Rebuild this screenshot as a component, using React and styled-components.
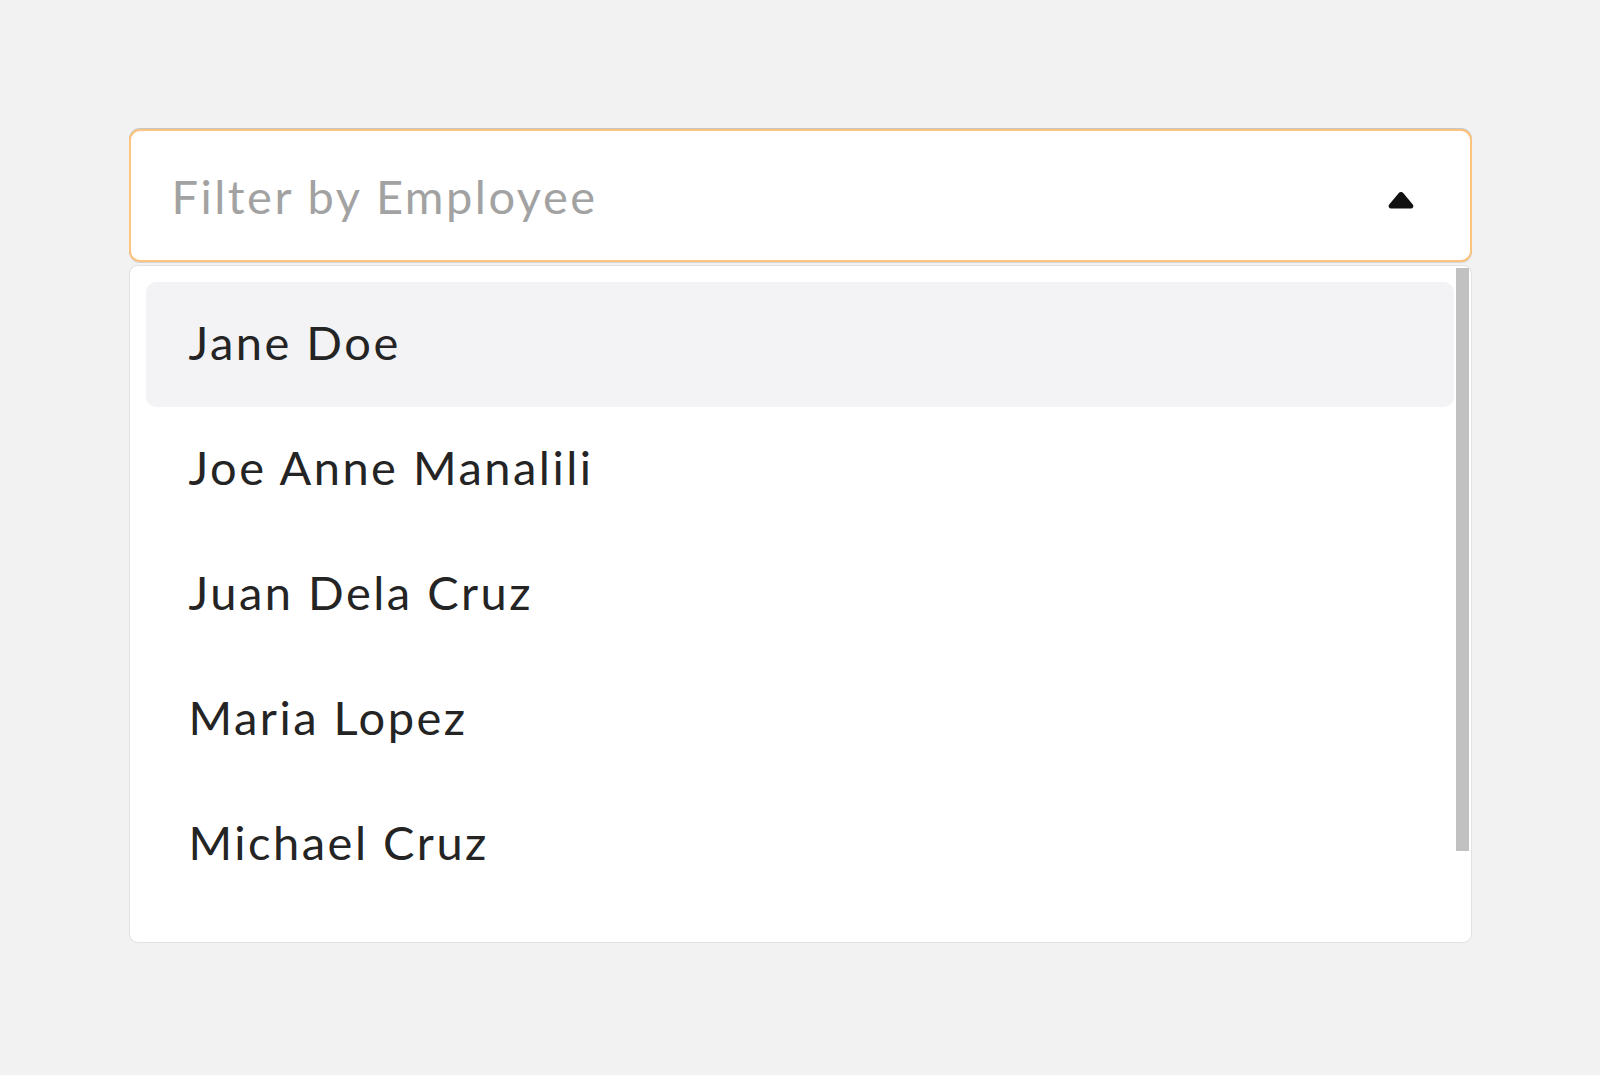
import styled, { createGlobalStyle } from "styled-components";

const GlobalStyle = createGlobalStyle`
    html, body {
        margin: 0;
        padding: 0;
        background: #f2f2f2;
        font-family: "Lato", "Noto Sans", sans-serif;
    }
`;

const Page = styled.div`
    min-height: 1075px;
    padding-top: 129px;
    box-sizing: border-box;
`;

const Select = styled.div`
    width: 1343px;
    margin: 0 auto;
    display: flex;
    flex-direction: column;
    gap: 3px;
`;

const Trigger = styled.button`
    height: 133px;
    display: flex;
    align-items: center;
    justify-content: space-between;
    padding: 0 55px 0 41px;
    background: #fff;
    border: 2px solid #fcc47f;
    border-radius: 11px;
    box-shadow: 0 -1px 0 rgba(0, 0, 0, 0.18), 0 1px 0 rgba(0, 0, 0, 0.12);
    font-family: inherit;
    cursor: pointer;

    svg {
        margin-top: 9px;
    }
`;

const Placeholder = styled.span`
    font-size: 47px;
    letter-spacing: 2.5px;
    color: #a2a2a2;
`;

const Menu = styled.div`
    position: relative;
    height: 678px;
    box-sizing: border-box;
    overflow: hidden;
    background: #fff;
    border: 1px solid #e2e2e5;
    border-radius: 9px;
`;

const List = styled.ul`
    list-style: none;
    margin: 0;
    padding: 16px 17px 16px 16px;
`;

const Option = styled.li`
    height: 125px;
    box-sizing: border-box;
    display: flex;
    align-items: center;
    padding: 0 0 5px 43px;
    border-radius: 10px;
    background: ${(props) => (props.active ? "#f3f3f5" : "transparent")};
    font-size: 47px;
    letter-spacing: 2.5px;
    color: #242424;
`;

/* scrollbar thumb drawn over the list */
const ScrollThumb = styled.div`
    position: absolute;
    top: 2px;
    right: 2px;
    width: 13px;
    height: 583px;
    background: #c1c1c1;
`;

const employees = ["Jane Doe", "Joe Anne Manalili", "Juan Dela Cruz", "Maria Lopez", "Michael Cruz"];

function CaretUp() {
    return (
        <svg width="28" height="19" viewBox="0 0 28 19">
            <path
                d="M11.6 2.2 a3 3 0 0 1 4.8 0 l9.4 11.4 a2.4 2.4 0 0 1 -1.9 3.9 h-19.8 a2.4 2.4 0 0 1 -1.9 -3.9 z"
                fill="#111"
            />
        </svg>
    );
}

export default function App() {
    return (
        <Page>
            <GlobalStyle />
            <Select>
                <Trigger>
                    <Placeholder>Filter by Employee</Placeholder>
                    <CaretUp />
                </Trigger>
                <Menu>
                    <List>
                        {employees.map((name, i) => (
                            <Option key={name} active={i === 0}>
                                {name}
                            </Option>
                        ))}
                    </List>
                    <ScrollThumb />
                </Menu>
            </Select>
        </Page>
    );
}
